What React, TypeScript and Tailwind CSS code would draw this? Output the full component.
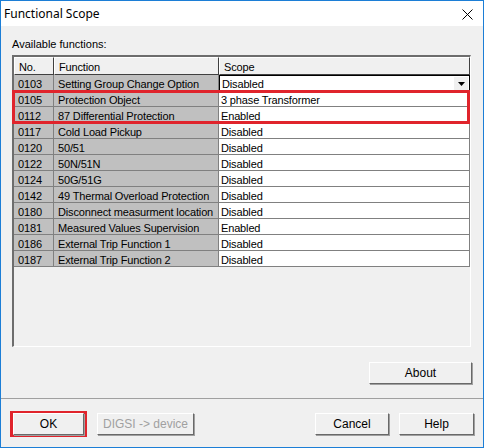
import React from 'react'

const rows: [string, string, string][] = [
  ['0103', 'Setting Group Change Option', 'Disabled'],
  ['0105', 'Protection Object', '3 phase Transformer'],
  ['0112', '87 Differential Protection', 'Enabled'],
  ['0117', 'Cold Load Pickup', 'Disabled'],
  ['0120', '50/51', 'Disabled'],
  ['0122', '50N/51N', 'Disabled'],
  ['0124', '50G/51G', 'Disabled'],
  ['0142', '49 Thermal Overload Protection', 'Disabled'],
  ['0180', 'Disconnect measurment location', 'Disabled'],
  ['0181', 'Measured Values Supervision', 'Enabled'],
  ['0186', 'External Trip Function 1', 'Disabled'],
  ['0187', 'External Trip Function 2', 'Disabled'],
]

function WinButton({ label, disabled, className }: { label: string; disabled?: boolean; className?: string }) {
  return (
    <div
      className={
        'flex h-[22px] items-center justify-center border border-t-white border-l-white border-r-[#696969] border-b-[#696969] bg-[#f0f0f0] text-[12px] shadow-[1px_1px_0_#a0a0a0] ' +
        (disabled ? 'text-[#a0a0a0] ' : 'text-black ') +
        (className ?? '')
      }
    >
      {label}
    </div>
  )
}

export default function App() {
  return (
    <div
      className="flex h-[448px] w-[484px] flex-col border border-[#1c7ed6] bg-[#f0f0f0] text-black"
      style={{ fontFamily: '"Liberation Sans", Arial, sans-serif' }}
    >
      {/* Title bar */}
      <div className="flex h-[25px] shrink-0 items-center justify-between bg-white pl-[3px] pr-[10px]">
        <span className="text-[12px]" style={{ fontFamily: '"Noto Sans", "Open Sans", sans-serif' }}>
          Functional Scope
        </span>
        <svg width="11" height="11" viewBox="0 0 11 11" className="mt-[1px]">
          <path d="M0.5 0.5 L10.5 10.5 M10.5 0.5 L0.5 10.5" stroke="#000" strokeWidth="1" />
        </svg>
      </div>

      {/* Client */}
      <div className="flex flex-1 flex-col px-[11px]">
        <div className="pt-[12px] text-[11px] leading-[13px]">Available functions:</div>

        {/* Table */}
        <div className="relative mt-[4px] flex h-[292px] w-[459px] flex-col border-t-2 border-l-2 border-b border-r border-t-[#6d6d6d] border-l-[#6d6d6d] border-b-white border-r-white bg-[#f0f0f0] text-[11px] leading-[12px] tracking-[-0.15px]">
          {/* Header */}
          <div className="flex h-[18px]">
            <div className="w-[40px] border-r border-b border-[#404040] border-t border-l border-t-white border-l-white pl-[4px] pt-[3px]">No.</div>
            <div className="w-[165px] border-r border-b border-[#404040] border-t border-l border-t-white border-l-white pl-[4px] pt-[3px]">Function</div>
            <div className="w-[251px] border-r border-b border-[#404040] border-t border-l border-t-white border-l-white pl-[4px] pt-[3px]">Scope</div>
          </div>
          {rows.map((r, i) => (
            <div key={r[0]} className="flex h-[16px]">
              <div className="w-[40px] border-r border-b border-[#808080] bg-[#c0c0c0] pl-[4px] pt-[3px]">{r[0]}</div>
              <div className="w-[165px] border-r border-b border-[#808080] bg-[#c0c0c0] pl-[4px] pt-[3px] whitespace-nowrap">{r[1]}</div>
              <div
                className={
                  'flex w-[251px] items-start justify-between border-b border-r border-[#808080] bg-white pl-[2px] ' +
                  (i === 0 ? 'border border-black pt-[2px]' : 'pt-[3px]')
                }
              >
                <span>{r[2]}</span>
                {i === 0 && (
                  <div className="mr-[1px] mt-[-1px] flex h-[13px] w-[14px] items-center justify-center bg-[#f0f0f0]">
                    <svg width="7" height="4" viewBox="0 0 7 4">
                      <path d="M0 0 H7 L3.5 4 Z" fill="#000" />
                    </svg>
                  </div>
                )}
              </div>
            </div>
          ))}
          {/* Highlight box */}
          <div className="pointer-events-none absolute left-[-2px] top-[33px] h-[34px] w-[458px] border-[3px] border-[#e0242c]" />
        </div>

        <div className="mt-[15px] flex justify-end">
          <WinButton label="About" className="w-[103px]" />
        </div>
      </div>

      {/* Separator */}
      <div className="h-[2px] shrink-0 border-t border-[#a0a0a0] border-b-white" />

      {/* Bottom buttons */}
      <div className="flex h-[47px] shrink-0 items-start px-[9px] pt-[11px]">
        <div className="flex h-[26px] w-[77px] items-center justify-center border-[3px] border-[#e0242c]">
          <WinButton label="OK" className="w-[71px] h-[20px]" />
        </div>
        <WinButton label="DIGSI -> device" disabled className="ml-[10px] mt-[2px] w-[97px]" />
        <div className="flex-1" />
        <WinButton label="Cancel" className="mt-[2px] w-[74px]" />
        <WinButton label="Help" className="ml-[10px] mt-[2px] w-[75px]" />
      </div>
    </div>
  )
}
